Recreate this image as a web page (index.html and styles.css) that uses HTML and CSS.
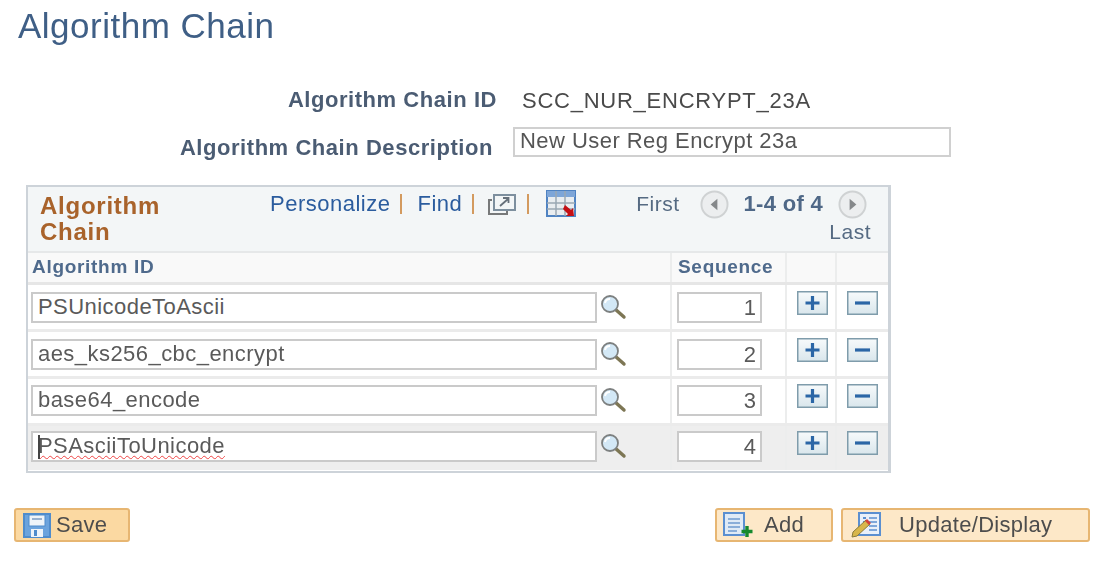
FILE: index.html
```html
<!DOCTYPE html>
<html lang="en">
<head>
<meta charset="utf-8">
<title>Algorithm Chain</title>
<link rel="stylesheet" href="styles.css">
</head>
<body>
<svg class="defs" width="0" height="0" aria-hidden="true">
  <defs>
    <linearGradient id="btn-fill" x1="0" y1="0" x2="0" y2="1">
      <stop offset="0" stop-color="#f7fafb"/>
      <stop offset="1" stop-color="#d9e6ec"/>
    </linearGradient>
    <symbol id="lens" viewBox="0 0 28 28">
      <path d="M16 16l9 8" stroke="#7d7654" stroke-width="3.4" stroke-linecap="round" fill="none"/>
      <circle cx="11" cy="11" r="8" fill="#d3e8f6" stroke="#7d8080" stroke-width="1.800"/>
      <path d="M6 10a5 5 0 0 1 5-4" stroke="#fff" stroke-width="2" fill="none"/>
    </symbol>
    <symbol id="plus" viewBox="0 0 31 24">
      <rect x="0.750" y="0.750" width="29.500" height="22.500" fill="url(#btn-fill)" stroke="#7f9cab" stroke-width="1.500"/>
      <path d="M15.500 5v14M8.500 12h14" stroke="#2b66a6" stroke-width="3.200"/>
    </symbol>
    <symbol id="minus" viewBox="0 0 31 24">
      <rect x="0.750" y="0.750" width="29.500" height="22.500" fill="url(#btn-fill)" stroke="#7f9cab" stroke-width="1.500"/>
      <path d="M8 12h15" stroke="#2b66a6" stroke-width="3.200"/>
    </symbol>
  </defs>
</svg>
<main class="page">
  <h1 class="title">Algorithm Chain</h1>
  <section class="summary">
    <div class="summary-row first">
      <span class="label label-id">Algorithm Chain ID</span>
      <span class="value">SCC_NUR_ENCRYPT_23A</span>
    </div>
    <div class="summary-row second">
      <span class="label label-desc">Algorithm Chain Description</span>
      <div class="desc-field">New User Reg Encrypt 23a</div>
    </div>
  </section>

  <section class="grid-box">
    <div class="grid-head">
      <h2 class="grid-title">Algorithm<br>Chain</h2>
      <nav class="tools">
        <a class="link">Personalize</a><span class="sep"></span>
        <a class="link">Find</a><span class="sep"></span>
        <svg class="popout" viewBox="0 0 30 26" width="30" height="26">
          <path d="M5 8H2v14h18v-4" fill="none" stroke="#77797a" stroke-width="2"/>
          <rect x="7" y="3" width="21" height="15" fill="#f3f6f7" stroke="#7d8f9e" stroke-width="2"/>
          <path d="M13 14l8-7M16 6h5.500v5" fill="none" stroke="#66707a" stroke-width="1.800"/>
        </svg><span class="sep"></span>
        <svg class="sheet" viewBox="0 0 32 28" width="32" height="28">
          <rect x="1" y="1" width="28" height="25" fill="#e9edf0" stroke="#4f83c2" stroke-width="2"/>
          <rect x="1" y="1" width="28" height="6" fill="#7ea6d8"/>
          <path d="M10 1v25M19 1v25M1 13h28M1 19h28" stroke="#9aa8b3" stroke-width="1.500"/>
          <path d="M19 15l6 5 2-2 1 8h-8l2-2-5-5z" fill="#c40f14"/>
        </svg>
      </nav>
      <div class="pager">
        <div class="pager-top">
          <span class="first">First</span>
          <svg class="arrow" viewBox="0 0 30 30" width="29" height="29"><circle cx="15" cy="15" r="13.500" fill="#eceeef" stroke="#cfd2d3" stroke-width="2"/><path d="M18 9v12l-7-6z" fill="#85888a"/></svg>
          <span class="count">1-4 of 4</span>
          <svg class="arrow" viewBox="0 0 30 30" width="29" height="29"><circle cx="15" cy="15" r="13.500" fill="#eceeef" stroke="#cfd2d3" stroke-width="2"/><path d="M12 9v12l7-6z" fill="#85888a"/></svg>
        </div>
        <span class="last">Last</span>
      </div>
    </div>
    <table class="rows">
      <thead>
        <tr>
          <th class="col-id">Algorithm ID</th>
          <th class="col-seq">Sequence</th>
          <th class="col-btn"></th>
          <th class="col-btn2"></th>
        </tr>
      </thead>
      <tbody>
        <tr>
          <td><div class="id-cell"><div class="field">PSUnicodeToAscii</div><svg class="lens"><use href="#lens"/></svg></div></td>
          <td><div class="seq-field">1</div></td>
          <td><svg class="btn"><use href="#plus"/></svg></td>
          <td><svg class="btn"><use href="#minus"/></svg></td>
        </tr>
        <tr>
          <td><div class="id-cell"><div class="field">aes_ks256_cbc_encrypt</div><svg class="lens"><use href="#lens"/></svg></div></td>
          <td><div class="seq-field">2</div></td>
          <td><svg class="btn"><use href="#plus"/></svg></td>
          <td><svg class="btn"><use href="#minus"/></svg></td>
        </tr>
        <tr>
          <td><div class="id-cell"><div class="field">base64_encode</div><svg class="lens"><use href="#lens"/></svg></div></td>
          <td><div class="seq-field">3</div></td>
          <td><svg class="btn"><use href="#plus"/></svg></td>
          <td><svg class="btn"><use href="#minus"/></svg></td>
        </tr>
        <tr class="active">
          <td><div class="id-cell"><div class="field"><span class="caret"></span><span class="misspelt">PSAsciiToUnicode</span></div><svg class="lens"><use href="#lens"/></svg></div></td>
          <td><div class="seq-field">4</div></td>
          <td><svg class="btn"><use href="#plus"/></svg></td>
          <td><svg class="btn"><use href="#minus"/></svg></td>
        </tr>
      </tbody>
    </table>
  </section>

  <footer class="actions">
    <button class="action save">
      <svg viewBox="0 0 28 25" width="28" height="25"><rect x="1" y="1" width="26" height="23" fill="#6ba3dd" stroke="#4f8ccc" stroke-width="2"/><rect x="6" y="2" width="16" height="11" fill="#eef4f9" stroke="#4f8ccc"/><path d="M9 6h10" stroke="#7d9cc0" stroke-width="1.500"/><rect x="8" y="16" width="12" height="8" fill="#eef4f9"/><rect x="11" y="17" width="3" height="6" fill="#4f8ccc"/></svg>
      <span>Save</span>
    </button>
    <div class="action-right">
      <button class="action add">
        <svg viewBox="0 0 30 26" width="30" height="26"><rect x="1" y="1" width="20" height="22" fill="#dfeaf6" stroke="#5b8fd0" stroke-width="2"/><path d="M5 7h12M5 11h12M5 15h12M5 19h9" stroke="#6f9ad0" stroke-width="1.500"/><path d="M24 14v11M18.500 19.500h11" stroke="#15892e" stroke-width="3.400"/></svg>
        <span>Add</span>
      </button>
      <button class="action update">
        <svg viewBox="0 0 32 26" width="32" height="26"><rect x="9" y="1" width="21" height="22" fill="#e9f0f9" stroke="#5b8fd0" stroke-width="2"/><path d="M19 6h8M19 10h8M19 14h8M19 18h8" stroke="#5b8fd0" stroke-width="1.500"/><path d="M13 6h3M13 10h3" stroke="#5b8fd0" stroke-width="2"/><path d="M3 20L16 8l4 4L7 24l-5 1z" fill="#d8b64a" stroke="#8a7a3a"/><path d="M15 9l4 4 2-2-4-4z" fill="#d2413a"/></svg>
        <span>Update/Display</span>
      </button>
    </div>
  </footer>
</main>
</body>
</html>
```
FILE: styles.css
```css
* { box-sizing: border-box; }
html, body { margin: 0; padding: 0; background: #fff; }
body { width: 1102px; height: 562px; overflow: hidden; font-family: "Liberation Sans", Arial, sans-serif; }
.defs { position: absolute; }
.page { padding: 5px 12px 0 14px; filter: blur(0.4px); }

.title { margin: 0 0 0 4px; height: 42px; font-size: 35px; line-height: 42px; font-weight: 400; color: #3f5f86; letter-spacing: 0.5px; }

.summary { height: 138px; padding-top: 39px; }
.summary-row { display: flex; align-items: center; }
.summary-row.first { height: 30px; }
.summary-row.second { height: 30px; margin-top: 11px; }
.label { font-size: 22px; font-weight: 700; color: #4b5c73; text-align: right; letter-spacing: 0.55px; }
.label-id { width: 483px; position: relative; top: -1px; }
.label-desc { width: 479px; position: relative; top: 6px; }
.value { margin-left: 25px; font-size: 22px; color: #4a4a4a; letter-spacing: 0.75px; }
.desc-field { margin-left: 20px; width: 438px; height: 30px; border: 2px solid #d0d0d0; padding: 0 5px; font-size: 22px; line-height: 24px; color: #555; letter-spacing: 0.45px; }

.grid-box { margin-left: 12px; width: 865px; height: 288px; border: 2px solid #cdd3d9; border-right-width: 3px; background: #fff; }
.grid-head { height: 66px; background: #f3f6f7; display: flex; border-bottom: 2px solid #e6e8e9; }
.grid-title { margin: 6px 0 0 12px; width: 230px; font-size: 24px; line-height: 26px; font-weight: 700; color: #a9632b; letter-spacing: 0.75px; }
.tools { display: flex; align-items: flex-start; padding-top: 4px; }
.link { font-size: 22px; line-height: 26px; color: #2b5c9e; letter-spacing: 0.5px; }
.sep { width: 2px; height: 20px; margin: 3px 15px 0 10px; background: #d39a5f; }
.tools .sep:nth-of-type(2) { margin-right: 13px; }
.tools .sep:nth-of-type(3) { margin-right: 15px; }
.popout { margin-top: 1px; }
.sheet { margin: -1px 0 0 2px; }
.pager { margin-left: auto; padding-right: 17px; display: flex; flex-direction: column; align-items: flex-end; }
.pager-top { display: flex; align-items: center; height: 30px; margin-top: 2px; margin-right: 4px; }
.first, .last { font-size: 21px; color: #556a82; letter-spacing: 0.5px; }
.first { margin-right: 20px; }
.count { margin: 0 15px; font-size: 22px; font-weight: 700; color: #4f6887; letter-spacing: 0.3px; }
.last { margin-top: 1px; }

.rows { width: 100%; border-collapse: collapse; table-layout: fixed; }
.rows th { height: 30px; background: #f9f9f9; border-left: 2px solid #eceded; border-bottom: 3px solid #e6e6e6; padding: 0 0 0 6px; text-align: left; font-size: 19px; font-weight: 700; color: #4f6a8c; letter-spacing: 0.7px; }
.rows th:first-child { border-left: 0; padding-left: 4px; }
.col-id { width: 643px; }
.col-seq { width: 115px; }
.col-btn { width: 50px; }
.rows td { height: 47px; border-left: 2px solid #eceded; border-bottom: 3px solid #ebebeb; padding: 0; vertical-align: top; }
.rows td:first-child { border-left: 0; }
.rows tr:last-child td { border-bottom: 0; height: 46px; }
.active td { background: #eeeeee; }

.id-cell { display: flex; align-items: center; padding: 7px 0 0 3px; }
.field { position: relative; width: 566px; height: 31px; border: 2px solid #cacaca; background: #fff; padding-left: 5px; font-size: 22px; line-height: 25px; color: #5a5a5a; letter-spacing: 0.45px; }
.lens { width: 28px; height: 28px; margin-left: 2px; }
.caret { position: absolute; left: 5px; top: 2px; width: 2px; height: 24px; background: #444; }
.misspelt { text-decoration: underline wavy #f04444 1px; text-underline-offset: 2px; }
.seq-field { margin: 7px 0 0 5px; width: 85px; height: 31px; border: 2px solid #cacaca; background: #fff; padding-right: 4px; text-align: right; font-size: 22px; line-height: 28px; color: #5a5a5a; }
.btn { display: block; width: 31px; height: 24px; margin: 6px 0 0 10px; }
.rows tbody tr:nth-child(3) .id-cell { padding-top: 6px; }
.rows tbody tr:nth-child(3) .seq-field { margin-top: 6px; }
.rows tbody tr:nth-child(4) .id-cell { padding-top: 5px; }
.rows tbody tr:nth-child(4) .seq-field { margin-top: 5px; }
.rows tbody tr:nth-child(3) .btn, .rows tbody tr:nth-child(4) .btn { margin-top: 5px; }

.actions { margin-top: 35px; display: flex; justify-content: space-between; }
.action-right { display: flex; gap: 8px; }
.action { display: flex; align-items: center; height: 34px; border: 2px solid #e7b672; border-radius: 3px; background: #fbdca8; padding: 0; font-family: inherit; font-size: 22px; color: #4d4d4d; letter-spacing: 0.3px; }
.save { width: 116px; padding-left: 7px; gap: 5px; background: #fbd9a2; }
.add { width: 118px; padding-left: 6px; gap: 11px; background: #fde8c8; }
.update { width: 249px; padding-left: 7px; gap: 17px; background: #fde8c8; }
```
